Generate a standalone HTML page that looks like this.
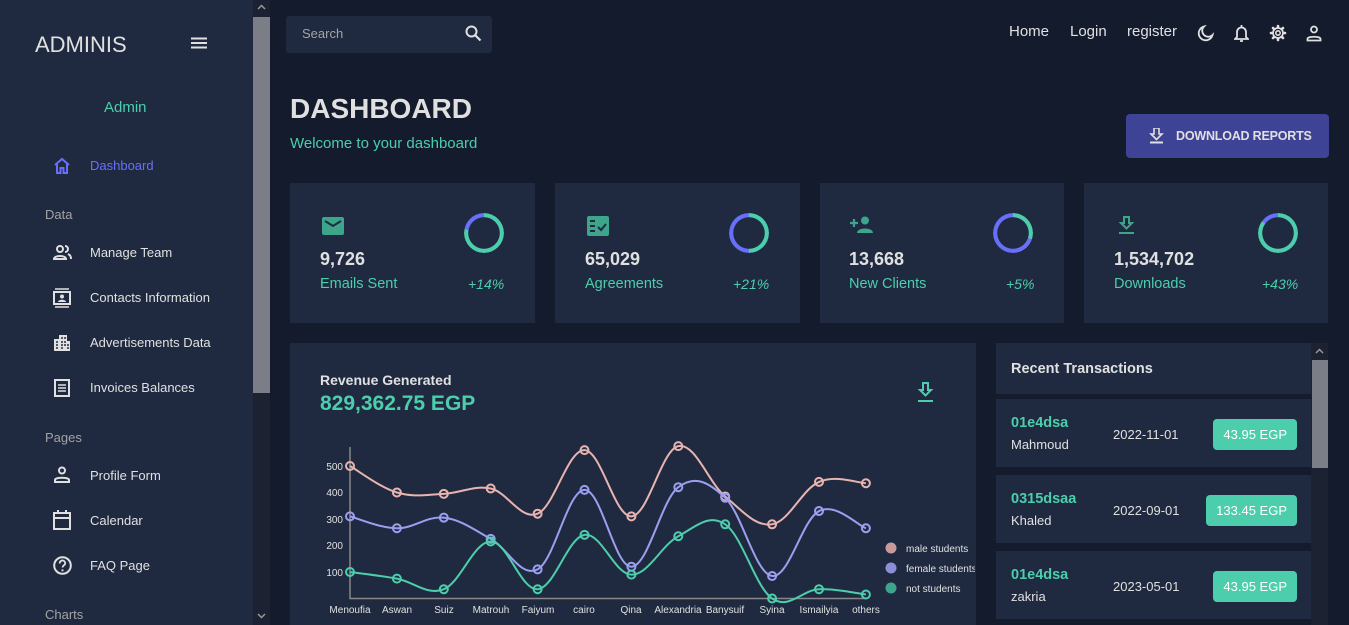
<!DOCTYPE html>
<html><head><meta charset="utf-8">
<style>
*{margin:0;padding:0;box-sizing:border-box}
body{width:1349px;height:625px;overflow:hidden;background:#141b2d;font-family:"Liberation Sans",sans-serif;color:#e0e0e0;position:relative}
.abs{position:absolute}
#side{left:0;top:0;width:253px;height:625px;background:#1f2a40}
#sb{left:253px;top:0;width:17px;height:625px;background:#1d2233}
.nav{position:absolute;left:90px;font-size:13px;color:#e0e0e0}
.ico{position:absolute;left:53px}
.sec{position:absolute;left:45px;font-size:13px;color:#a3a3a3}
.card{position:absolute;background:#1f2a40}
.g{color:#4cceac}
.ring{position:absolute;width:40px;height:40px;border-radius:50%;-webkit-mask:radial-gradient(circle,transparent 15.5px,#000 16px);mask:radial-gradient(circle,transparent 15.5px,#000 16px)}
.num{position:absolute;font-weight:bold;font-size:18px;color:#e0e0e0}
.lab{position:absolute;font-size:14.5px;color:#4cceac}
.pct{position:absolute;font-size:14px;font-style:italic;color:#4cceac}
.row{position:absolute;left:996px;width:315px;height:68px;background:#1f2a40}
.row .id{position:absolute;left:15px;top:16px;font-size:14.5px;color:#4cceac;font-weight:bold}
.row .nm{position:absolute;left:15px;top:38px;font-size:13px;color:#e0e0e0}
.row .dt{position:absolute;left:117px;top:28px;font-size:13px;color:#e0e0e0}
.row .pr{position:absolute;right:14px;top:20px;height:31px;background:#4cceac;border-radius:4px;font-size:13px;color:#fff;line-height:31px;padding:0 10px}
.ax{font-family:"Liberation Sans",sans-serif;font-size:10px;fill:#e0e0e0}
</style></head><body>
<div id="side" class="abs">
  <div class="abs" style="left:35px;top:32px;font-size:22px;color:#e0e0e0">ADMINIS</div>
  <svg class="abs" style="left:191px;top:37px" width="16" height="12"><path d="M0 1.5h16M0 6h16M0 10.5h16" stroke="#e0e0e0" stroke-width="2"/></svg>
  <div class="abs g" style="left:104px;top:99px;font-size:15px">Admin</div>
  <svg class="ico" style="top:157px" width="18" height="17" viewBox="0 0 18 17"><path d="M2 8L9 2l7 6M4 6.5V16h3.5v-5h3v5H14V6.5" fill="none" stroke="#6870fa" stroke-width="2"/></svg>
  <div class="nav" style="top:158px;color:#6870fa">Dashboard</div>
  <div class="sec" style="top:207px">Data</div>
  <svg class="ico" style="top:245px" width="20" height="15" viewBox="0 0 20 15"><circle cx="7" cy="4" r="3" fill="none" stroke="#e0e0e0" stroke-width="2"/><path d="M1 14c0-4 12-4 12 0zM12 1a3 3 0 010 6M15 9c2 1 3 2 3 5" fill="none" stroke="#e0e0e0" stroke-width="2"/></svg>
  <div class="nav" style="top:245px">Manage Team</div>
  <svg class="ico" style="top:288px" width="18" height="20" viewBox="0 0 18 20"><path d="M2 1h14M2 19h14" stroke="#e0e0e0" stroke-width="1.5"/><rect x="1" y="4" width="16" height="12" fill="none" stroke="#e0e0e0" stroke-width="2"/><circle cx="9" cy="8.5" r="2" fill="#e0e0e0"/><path d="M5 14c0-3 8-3 8 0z" fill="#e0e0e0"/></svg>
  <div class="nav" style="top:290px">Contacts Information</div>
  <svg class="ico" style="top:334px" width="18" height="17" viewBox="0 0 18 17"><path d="M1 17V5h5V1h8v6h3v10z" fill="#e0e0e0"/><path d="M3 8h2M3 11h2M3 14h2M8 4h2M11 4h2M8 8h2M11 8h2M8 11h2M11 11h2M14 11h2M8 14h2M14 14h2" stroke="#1f2a40" stroke-width="1.6"/></svg>
  <div class="nav" style="top:335px">Advertisements Data</div>
  <svg class="ico" style="top:379px" width="18" height="18" viewBox="0 0 18 18"><rect x="2" y="1" width="14" height="16" fill="none" stroke="#e0e0e0" stroke-width="2"/><path d="M5 6h8M5 9h8M5 12h8" stroke="#e0e0e0" stroke-width="1.6"/></svg>
  <div class="nav" style="top:380px">Invoices Balances</div>
  <div class="sec" style="top:430px">Pages</div>
  <svg class="ico" style="top:466px" width="18" height="17" viewBox="0 0 18 17"><circle cx="9" cy="4.5" r="3" fill="none" stroke="#e0e0e0" stroke-width="2"/><path d="M2 16v-2c0-3 14-3 14 0v2z" fill="none" stroke="#e0e0e0" stroke-width="2"/></svg>
  <div class="nav" style="top:468px">Profile Form</div>
  <svg class="ico" style="top:510px" width="18" height="20" viewBox="0 0 18 20"><rect x="1" y="3" width="16" height="16" fill="none" stroke="#e0e0e0" stroke-width="2"/><path d="M1 8h16M5 0v4M13 0v4" stroke="#e0e0e0" stroke-width="2"/></svg>
  <div class="nav" style="top:513px">Calendar</div>
  <svg class="ico" style="top:556px" width="19" height="19" viewBox="0 0 19 19"><circle cx="9.5" cy="9.5" r="8.3" fill="none" stroke="#e0e0e0" stroke-width="2"/><path d="M6.8 7.5a2.7 2.7 0 115 1c-1 1-2.3 1.5-2.3 3" fill="none" stroke="#e0e0e0" stroke-width="1.8"/><circle cx="9.5" cy="14.3" r="1.1" fill="#e0e0e0"/></svg>
  <div class="nav" style="top:558px">FAQ Page</div>
  <div class="sec" style="top:607px">Charts</div>
</div>
<div id="sb" class="abs"><div class="abs" style="left:0;top:17px;width:17px;height:376px;background:#7b7e86"></div>
<svg class="abs" style="left:4px;top:4px" width="9" height="6"><path d="M1 5l3.5-3.5L8 5" fill="none" stroke="#9a9a9a" stroke-width="1.5"/></svg>
<svg class="abs" style="left:4px;top:613px" width="9" height="6"><path d="M1 1l3.5 3.5L8 1" fill="none" stroke="#9a9a9a" stroke-width="1.5"/></svg></div>

<div class="abs" style="left:286px;top:16px;width:206px;height:37px;background:#1f2a40;border-radius:3px"></div>
<div class="abs" style="left:302px;top:26px;font-size:13px;color:#a3a3a3">Search</div>
<svg class="abs" style="left:465px;top:25px" width="17" height="17" viewBox="0 0 17 17"><circle cx="6.5" cy="6.5" r="5" fill="none" stroke="#e0e0e0" stroke-width="2"/><path d="M10 10l5.5 5.5" stroke="#e0e0e0" stroke-width="2.2"/></svg>
<div class="abs" style="left:1009px;top:23px;font-size:15px">Home</div>
<div class="abs" style="left:1070px;top:23px;font-size:15px">Login</div>
<div class="abs" style="left:1127px;top:23px;font-size:15px">register</div>
<svg class="abs" style="left:1197px;top:25px" width="17" height="17" viewBox="0 0 17 17"><path d="M7 1.5a7 7 0 108.5 8.5A6 6 0 017 1.5z" fill="none" stroke="#e0e0e0" stroke-width="1.8"/></svg>
<svg class="abs" style="left:1234px;top:24px" width="15" height="19" viewBox="0 0 15 19"><path d="M3 13V8a4.5 4.5 0 019 0v5l2 2H1z" fill="none" stroke="#e0e0e0" stroke-width="1.8"/><path d="M6 17h3M7.5 1v2" stroke="#e0e0e0" stroke-width="1.8"/></svg>
<svg class="abs" style="left:1269px;top:24px" width="18" height="18" viewBox="0 0 18 18"><g stroke="#e0e0e0" stroke-width="2.6" stroke-linecap="round"><path d="M9 2v1.5M9 14.5V16M2 9h1.5M14.5 9H16M4 4l1.1 1.1M12.9 12.9L14 14M4 14l1.1-1.1M12.9 5.1L14 4"/></g><circle cx="9" cy="9" r="5" fill="#141b2d" stroke="#e0e0e0" stroke-width="1.7"/><circle cx="9" cy="9" r="2.2" fill="none" stroke="#e0e0e0" stroke-width="1.6"/></svg>
<svg class="abs" style="left:1306px;top:25px" width="16" height="17" viewBox="0 0 16 17"><circle cx="8" cy="4.5" r="3" fill="none" stroke="#e0e0e0" stroke-width="1.8"/><path d="M1.5 15.5v-1.5c0-3 13-3 13 0v1.5z" fill="none" stroke="#e0e0e0" stroke-width="1.8"/></svg>

<div class="abs" style="left:290px;top:93px;font-size:28px;font-weight:bold;color:#e0e0e0">DASHBOARD</div>
<div class="abs g" style="left:290px;top:135px;font-size:15px">Welcome to your dashboard</div>
<div class="abs" style="left:1126px;top:114px;width:203px;height:44px;background:#3e4396;border-radius:4px"></div>
<svg class="abs" style="left:1149px;top:128px" width="15" height="16" viewBox="0 0 15 16"><path d="M5 0h5v6h3l-5.5 5.5L2 6h3z" fill="none" stroke="#e0e0e0" stroke-width="1.6"/><path d="M1 14.5h13" stroke="#e0e0e0" stroke-width="2"/></svg>
<div class="abs" style="left:1176px;top:129px;font-size:12.5px;font-weight:bold;color:#e0e0e0;letter-spacing:-0.2px">DOWNLOAD REPORTS</div>

<!-- stat cards -->
<div class="card" style="left:290px;top:183px;width:245px;height:140px"></div>
<div class="card" style="left:555px;top:183px;width:245px;height:140px"></div>
<div class="card" style="left:820px;top:183px;width:244px;height:140px"></div>
<div class="card" style="left:1084px;top:183px;width:244px;height:140px"></div>
<svg class="abs" style="left:322px;top:217px" width="22" height="18" viewBox="0 0 22 18"><rect width="22" height="18" rx="2" fill="#3da58a"/><path d="M3 4l8 5 8-5" fill="none" stroke="#1f2a40" stroke-width="2"/></svg>
<svg class="abs" style="left:587px;top:216px" width="22" height="20" viewBox="0 0 22 20"><rect width="22" height="20" rx="2" fill="#3da58a"/><path d="M3 5h5M3 10h5M3 15h5M11 11l3 3 5-6" fill="none" stroke="#1f2a40" stroke-width="2"/></svg>
<svg class="abs" style="left:850px;top:216px" width="24" height="17" viewBox="0 0 24 17"><circle cx="15" cy="4.5" r="4" fill="#3da58a"/><path d="M7 17c0-6 16-6 16 0z" fill="#3da58a"/><path d="M0 7h8M4 3v8" stroke="#3da58a" stroke-width="2.2"/></svg>
<svg class="abs" style="left:1118px;top:216px" width="17" height="19" viewBox="0 0 17 19"><path d="M6 1h5v6h3l-5.5 5.5L3 7h3z" fill="none" stroke="#3da58a" stroke-width="2"/><path d="M1 17h15" stroke="#3da58a" stroke-width="2"/></svg>
<div class="ring" style="left:464px;top:213px;background:conic-gradient(#4cceac 0 78%,#6870fa 78% 100%)"></div>
<div class="ring" style="left:729px;top:213px;background:conic-gradient(#4cceac 0 50%,#6870fa 50% 100%)"></div>
<div class="ring" style="left:993px;top:213px;background:conic-gradient(#4cceac 0 30%,#6870fa 30% 100%)"></div>
<div class="ring" style="left:1258px;top:213px;background:conic-gradient(#4cceac 0 85%,#6870fa 85% 100%)"></div>
<div class="num" style="left:320px;top:249px">9,726</div>
<div class="num" style="left:585px;top:249px">65,029</div>
<div class="num" style="left:849px;top:249px">13,668</div>
<div class="num" style="left:1114px;top:249px">1,534,702</div>
<div class="lab" style="left:320px;top:276px">Emails Sent</div>
<div class="lab" style="left:585px;top:276px">Agreements</div>
<div class="lab" style="left:849px;top:276px">New Clients</div>
<div class="lab" style="left:1114px;top:276px">Downloads</div>
<div class="pct" style="left:468px;top:276px">+14%</div>
<div class="pct" style="left:733px;top:276px">+21%</div>
<div class="pct" style="left:1006px;top:276px">+5%</div>
<div class="pct" style="left:1262px;top:276px">+43%</div>

<!-- chart -->
<div class="card" style="left:290px;top:343px;width:686px;height:282px"></div>
<div class="abs" style="left:320px;top:372px;font-size:14px;font-weight:bold;color:#e0e0e0">Revenue Generated</div>
<div class="abs g" style="left:320px;top:392px;font-size:21px;font-weight:bold">829,362.75 EGP</div>
<svg class="abs" style="left:917px;top:382px" width="17" height="21" viewBox="0 0 17 21"><path d="M6 1h5v7h3l-5.5 5.5L3 8h3z" fill="none" stroke="#4cceac" stroke-width="2"/><path d="M1 19h15" stroke="#4cceac" stroke-width="2"/></svg>
<svg class="abs" style="left:290px;top:430px;overflow:hidden" width="685" height="195" id="ch">
<path d="M60 17V168.5H576" fill="none" stroke="#888" stroke-width="1.5"/>
<g class="ax" text-anchor="end"><text x="53" y="40">500</text><text x="53" y="66">400</text><text x="53" y="93">300</text><text x="53" y="119">200</text><text x="53" y="146">100</text></g>
<g class="ax" text-anchor="middle"><text x="60" y="183">Menoufia</text><text x="107" y="183">Aswan</text><text x="154" y="183">Suiz</text><text x="201" y="183">Matrouh</text><text x="248" y="183">Faiyum</text><text x="294" y="183">cairo</text><text x="341" y="183">Qina</text><text x="388" y="183">Alexandria</text><text x="435" y="183">Banysuif</text><text x="482" y="183">Syina</text><text x="529" y="183">Ismailyia</text><text x="576" y="183">others</text></g>
<circle cx="601" cy="118" r="5.5" fill="#c89a9a"/><circle cx="601" cy="138" r="5.5" fill="#8a8fd8"/><circle cx="601" cy="158" r="5.5" fill="#3da58a"/>
<g class="ax"><text x="616" y="122">male students</text><text x="616" y="142">female students</text><text x="616" y="162">not students</text></g>
</svg>

<!-- transactions -->
<div class="abs" style="left:996px;top:343px;width:315px;height:51px;background:#1f2a40"></div>
<div class="abs" style="left:1011px;top:361px;font-size:14.5px;font-weight:bold;color:#e0e0e0">Recent Transactions</div>
<div class="row" style="top:399px"><div class="id">01e4dsa</div><div class="nm">Mahmoud</div><div class="dt">2022-11-01</div><div class="pr">43.95 EGP</div></div>
<div class="row" style="top:475px"><div class="id">0315dsaa</div><div class="nm">Khaled</div><div class="dt">2022-09-01</div><div class="pr">133.45 EGP</div></div>
<div class="row" style="top:551px"><div class="id">01e4dsa</div><div class="nm">zakria</div><div class="dt">2023-05-01</div><div class="pr">43.95 EGP</div></div>
<div class="abs" style="left:1311px;top:343px;width:17px;height:282px;background:#1d2233"><div class="abs" style="left:1px;top:17px;width:16px;height:108px;background:#7b7e86"></div>
<svg class="abs" style="left:4px;top:5px" width="9" height="6"><path d="M1 5l3.5-3.5L8 5" fill="none" stroke="#9a9a9a" stroke-width="1.5"/></svg></div>

<script>
(function(){
var svg=document.getElementById('ch'),ns='http://www.w3.org/2000/svg';
var xs=[];for(var i=0;i<12;i++)xs.push(60+i*46.9);
function Y(v){return 168.5-v*0.265;}
var sets=[["#e8b4b0",[500,400,395,415,320,560,310,575,385,280,440,435]],
["#9b9ff0",[310,265,305,225,110,410,120,420,380,85,330,265]],
["#4cceac",[100,75,35,215,35,240,90,235,280,0,35,15]]];
sets.forEach(function(s){
 var p=s[1].map(function(v,i){return [xs[i],Y(v)];});
 var d='M'+p[0][0]+' '+p[0][1];
 for(var i=0;i<p.length-1;i++){
  var p0=p[i-1]||p[i],p1=p[i],p2=p[i+1],p3=p[i+2]||p2,t=0.18;
  d+=' C'+(p1[0]+(p2[0]-p0[0])*t)+' '+(p1[1]+(p2[1]-p0[1])*t)+' '+(p2[0]-(p3[0]-p1[0])*t)+' '+(p2[1]-(p3[1]-p1[1])*t)+' '+p2[0]+' '+p2[1];
 }
 var e=document.createElementNS(ns,'path');e.setAttribute('d',d);e.setAttribute('fill','none');e.setAttribute('stroke',s[0]);e.setAttribute('stroke-width','2');svg.appendChild(e);
 p.forEach(function(q){var c=document.createElementNS(ns,'circle');c.setAttribute('cx',q[0]);c.setAttribute('cy',q[1]);c.setAttribute('r','4');c.setAttribute('fill','none');c.setAttribute('stroke',s[0]);c.setAttribute('stroke-width','2');svg.appendChild(c);});
});
})();
</script>
</body></html>
